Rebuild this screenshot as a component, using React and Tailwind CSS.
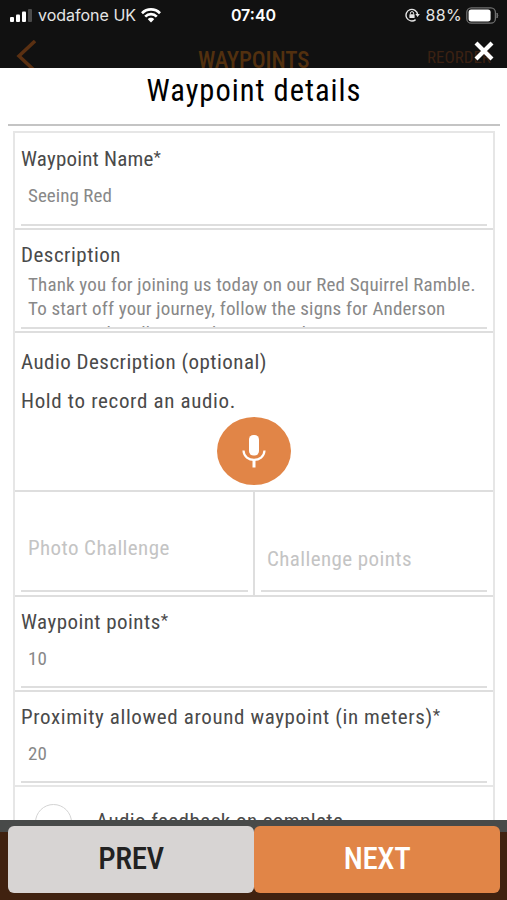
import React, { useState } from 'react'

function SignalIcon() {
  return (
    <svg className="w-[23px] h-[13px]" viewBox="0 0 23 13">
      <rect x="0" y="8" width="4" height="5" rx="1" fill="#fff" />
      <rect x="6" y="5.5" width="4" height="7.5" rx="1" fill="#fff" />
      <rect x="12" y="2.5" width="4" height="10.5" rx="1" fill="#fff" />
      <rect x="18" y="0" width="4" height="13" rx="1" fill="#4b4b4b" />
    </svg>
  )
}

function WifiIcon() {
  return (
    <svg className="w-5 h-[15px]" viewBox="0 0 20 15" fill="none" stroke="#fff" strokeWidth="2.7">
      <path d="M1 5.2C6 0.2 14 0.2 19 5.2" />
      <path d="M4.2 8.6C7.4 5.4 12.6 5.4 15.8 8.6" />
      <path d="M6.8 11.2C8.5 9.4 11.5 9.4 13.2 11.2L10 14.5Z" fill="#fff" stroke="none" />
    </svg>
  )
}

function LockIcon() {
  return (
    <svg className="w-[15px] h-[14px]" viewBox="0 0 15 14" fill="none" stroke="#e5e5e5">
      <path d="M10.6 11.6A5.8 5.8 0 1 1 12.6 6.5" strokeWidth="1.4" />
      <path d="M10.4 6H14.8L12.6 9Z" fill="#e5e5e5" stroke="none" />
      <path d="M5.4 6.4V5.2a1.6 1.6 0 0 1 3.2 0V6.4" strokeWidth="1" />
      <rect x="4.4" y="6.2" width="5.2" height="3.9" rx=".6" fill="#e5e5e5" stroke="none" />
    </svg>
  )
}

function BatteryIcon() {
  return (
    <svg className="w-[33px] h-[17px]" viewBox="0 0 33 17">
      <rect x=".8" y=".8" width="28.6" height="15.4" rx="4.5" fill="none" stroke="#707070" strokeWidth="1.3" />
      <rect x="2.6" y="2.6" width="22" height="11.8" rx="2.6" fill="#fff" />
      <path d="M31 6Q32.6 8.5 31 11Z" fill="#707070" stroke="#707070" />
    </svg>
  )
}

function MicIcon() {
  return (
    <svg className="w-6 h-[33px]" viewBox="0 0 24 33" fill="none" stroke="#fff" strokeWidth="2.2">
      <rect x="7" y="0" width="10" height="20.5" rx="4.5" fill="#fff" stroke="none" />
      <path d="M1.5 15.5C2 28 22 28 22.5 15.5" />
      <path d="M12 24.5V32.5" strokeWidth="3" />
    </svg>
  )
}

function Label({ children, className = '' }) {
  return <span className={`block text-[21px] leading-6 text-[#4a4a4a] whitespace-nowrap ${className}`}>{children}</span>
}

function Field({ label, value, onChange, labelClass }) {
  return (
    <label className="flex flex-col px-1.5 pt-[13px] pb-0.5 h-full">
      <Label className={labelClass}>
        {label}
        <span className="relative -top-[3px] text-[17px] leading-none">*</span>
      </Label>
      <input
        value={value}
        onChange={(e) => onChange(e.target.value)}
        className="mt-2 px-[7px] pb-2.5 flex-1 w-full min-h-0 text-[19px] tracking-[0.05px] text-[#888] border-b-2 border-[#dedede] outline-none"
      />
    </label>
  )
}

function App() {
  const [name, setName] = useState('Seeing Red')
  const [points, setPoints] = useState('10')
  const [proximity, setProximity] = useState('20')

  return (
    <div className="w-[507px] h-[900px] flex flex-col overflow-hidden bg-[#402210] font-['Roboto',sans-serif] [font-stretch:75%]">
      {/* Dimmed header behind the modal */}
      <div className="relative h-[68px] shrink-0 bg-[#111] overflow-hidden">
        <div className="grid grid-cols-3 items-center h-[30px] px-2.5 font-['Inter','Roboto',sans-serif] text-[16px] text-[#e5e5e5]">
          <div className="flex items-center gap-[5px] whitespace-nowrap">
            <SignalIcon />
            <span>vodafone UK</span>
            <WifiIcon />
          </div>
          <span className="text-center font-semibold text-white">07:40</span>
          <div className="flex items-center justify-end -mr-0.5">
            <LockIcon />
            <span className="ml-1.5 mr-1 tracking-[0.3px]">88%</span>
            <BatteryIcon />
          </div>
        </div>
        <div className="flex items-start h-10 pt-2.5 pl-4 text-[#52300f]">
          <svg className="w-5 h-8" viewBox="0 0 20 32" fill="none" stroke="#5a3012" strokeWidth="3.5">
            <path d="M19 1L3 16L19 31" />
          </svg>
          <span className="ml-[162px] mt-[5px] w-[111px] text-[23px] leading-8 font-medium tracking-[-0.1px]">WAYPOINTS</span>
          <span className="ml-[118px] mt-[5px] text-[17px] leading-6 text-[#3b2113]">REORDER</span>
        </div>
        <button className="absolute right-[13px] top-[41px]">
          <svg className="w-5 h-5" viewBox="0 0 20 20" stroke="#fff" strokeWidth="4.2">
            <path d="M2 2L18 18M18 2L2 18" />
          </svg>
        </button>
      </div>

      {/* Modal */}
      <div className="h-[752px] shrink-0 bg-white overflow-hidden">
        <h1 className="ml-2 mr-[7px] h-[58px] pt-[3px] text-[30.5px] leading-10 tracking-[1px] text-center text-black border-b-2 border-[#c4c4c4] whitespace-nowrap">
          Waypoint details
        </h1>

        <div className="ml-[13px] mr-3 mt-[5px] border-2 border-b-0 border-[#e6e6e6]">
          <div className="h-[97px] pt-px border-b-2 border-[#dedede]">
            <Field label="Waypoint Name" value={name} onChange={setName} labelClass="tracking-[0.2px]" />
          </div>

          <div className="h-[103px] px-1.5 pt-[13px] pb-0.5 flex flex-col border-b-2 border-[#dedede]">
            <Label className="tracking-[0.5px]">Description</Label>
            <div className="mt-1.5 px-[7px] flex-1 overflow-hidden text-[19px] leading-6 tracking-[0.18px] text-[#888] border-b-2 border-[#dedede] whitespace-nowrap">
              <p>Thank you for joining us today on our Red Squirrel Ramble.</p>
              <p>To start off your journey, follow the signs for Anderson</p>
              <p className="pt-px">nature trail, walking on the main path</p>
            </div>
          </div>

          <div className="h-[159px] px-1.5 pt-[17px] border-b-2 border-[#dedede]">
            <Label className="tracking-[0.47px]">Audio Description (optional)</Label>
            <Label className="mt-[15px] tracking-[0.65px]">Hold to record an audio.</Label>
            <button className="ml-[196px] mt-1 w-[74px] h-[68px] rounded-[50%] bg-[#e18547] flex items-center justify-center">
              <MicIcon />
            </button>
          </div>

          <div className="grid grid-cols-[240px_1fr] h-[105px] text-[21px] tracking-[0.4px] text-[#c4c4c4] border-b-2 border-[#dedede]">
            <div className="pl-1.5 pr-[5px] pb-[3px] border-r-2 border-[#dedede]">
              <div className="h-full pl-[7px] pt-[44px] leading-6 border-b-2 border-[#dedede]">Photo Challenge</div>
            </div>
            <div className="px-1.5 pb-[3px]">
              <div className="h-full pl-1.5 pt-[55px] leading-6 border-b-2 border-[#dedede]">Challenge points</div>
            </div>
          </div>

          <div className="h-[95px] border-b-2 border-[#dedede]">
            <Field label="Waypoint points" value={points} onChange={setPoints} labelClass="tracking-[0.45px]" />
          </div>
          <div className="h-[95px] border-b-2 border-[#e6e6e6]">
            <Field
              label="Proximity allowed around waypoint (in meters)"
              value={proximity}
              onChange={setProximity}
              labelClass="tracking-[0.62px]"
            />
          </div>

          <div className="flex h-16 pl-5 pt-[17px]">
            <span className="w-[37px] h-[37px] rounded-full border border-[#d4d4d4]"></span>
            <Label className="ml-6 mt-[5px] tracking-[0.42px]">Audio feedback on complete</Label>
          </div>
        </div>
      </div>

      {/* Footer buttons */}
      <div className="flex-1 bg-linear-to-b from-[#484a49] from-[12px] to-[#402210] to-[12px] pt-1.5 pl-2 pr-[7px]">
        <div className="grid grid-cols-2 h-[67px] text-[31px] font-medium tracking-[-0.4px]">
          <button className="rounded-md bg-[#d7d4d3] text-[#222]">PREV</button>
          <button className="rounded-md bg-[#e18547] text-white">NEXT</button>
        </div>
      </div>
    </div>
  )
}

export default App
